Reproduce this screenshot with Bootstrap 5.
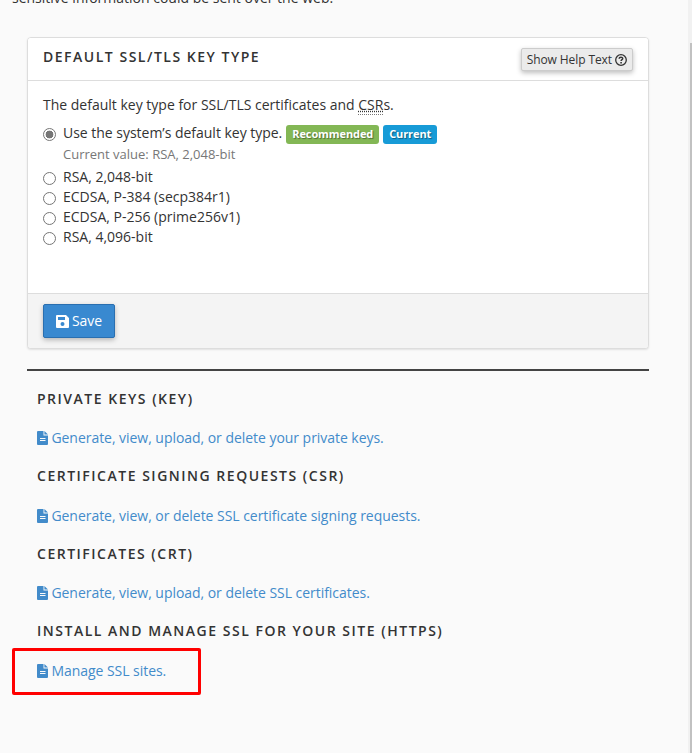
<!DOCTYPE html>
<html lang="en">
<head>
<meta charset="utf-8">
<meta name="viewport" content="width=device-width, initial-scale=1">
<title>SSL/TLS</title>
<link href="https://cdn.jsdelivr.net/npm/bootstrap@5.3.0/dist/css/bootstrap.min.css" rel="stylesheet">
<style>
body{font-family:"Open Sans",sans-serif;font-size:14px;line-height:20px;color:#333;background:#fafafa;height:753px;overflow:hidden}
.page{height:753px;width:688px;padding:0 39px 0 27px;overflow:hidden}
.intro{margin:-12px 0 29px -15px;height:20px}
.panel{--bs-card-border-color:#ddd;--bs-card-border-radius:4px;--bs-card-inner-border-radius:3px;height:312px;box-shadow:0 1px 2px rgba(0,0,0,.1);color:#333}
.panel .card-header{height:43px;padding:9px 15px 0;background:#fff}
.panel .card-body{padding:14px 15px 0}
.panel .card-footer{height:55px;padding:10px 15px;background:#f4f4f4}
.caps{font-size:14px;line-height:20px;font-weight:600;letter-spacing:1.51px;text-transform:uppercase;margin:0;color:#333;white-space:nowrap}
.btn-help{height:23px;margin-top:1px;padding:0 5px;border:1px solid #ccc;border-radius:2px;background:#ebebeb;color:#333;font-size:12px;letter-spacing:-.09px;line-height:21px;box-shadow:0 2px 5px rgba(0,0,0,.26)}
.btn-help svg{margin-left:3px}
.btn-save{height:34px;width:72px;padding:0;border:1px solid #2a6fb0;border-radius:2px;background:#3989d0;color:#fff;font-size:14px;letter-spacing:-.1px;line-height:32px;box-shadow:0 2px 5px rgba(0,0,0,.26)}
.btn-save svg{margin-right:3px}
.term{border-bottom:1px dotted #777;text-decoration:underline dotted;cursor:help}
.opt{height:20px}
.opt input{width:13px;height:13px;margin:5px 7px 0 0;appearance:none;border:1px solid #767676;border-radius:50%;background:#fff;flex:none}
.opt input:checked{background:radial-gradient(circle,#767676 0 3.6px,#fff 4.2px)}
.sysdef{letter-spacing:-.02px}
.tag{height:19px;margin:2px 0 0 4px;padding:0 6px;border-radius:3px;font-size:11px;letter-spacing:-.1px;line-height:18px;font-weight:700;color:#fff;text-shadow:1px 1px 1px rgba(0,0,0,.4)}
.tag-green{background:#83b755}
.tag-blue{background:#179bd7}
.hint{font-size:13px;color:#777;margin-left:20px;height:24px;line-height:22px}
.rule{height:2px;background:#444;margin:20px 0 18px}
.links{padding-left:10px}
.links a{color:#428bca;text-decoration:none;white-space:nowrap;letter-spacing:-.04px}
.links a svg{margin-right:3.4px}
.entry{height:77px}
.entry a{margin-top:19px;height:20px}
.entry:nth-child(even){height:78px}
.entry:nth-child(even) a{margin-top:20px}
.marker{position:absolute;left:12px;top:648px;width:189px;height:47px;border:3px solid #f00;border-radius:2px;pointer-events:none}
.track{width:4px;height:753px;background:#f1f1f1;padding:43px 0 0 2px}
.thumb{height:710px;background:#c1c1c1}
</style>
</head>
<body class="d-flex position-relative">
<main class="page">
  <p class="intro">sensitive information could be sent over the web.</p>
  <section class="card panel">
    <div class="card-header d-flex justify-content-between align-items-start">
      <h2 class="caps">Default SSL/TLS Key Type</h2>
      <button class="btn btn-help d-flex align-items-center" type="button">Show Help Text
        <svg width="12" height="12" viewBox="0 0 12 12" fill="none" stroke="#333"><circle cx="6" cy="6" r="5.3" stroke-width="1.3"/><path d="M4.1 4.7C4.2 2.6 7.8 2.7 7.7 4.6C7.6 5.7 6.1 5.7 6.1 7" stroke-width="1.5"/><path d="M6.1 7.9v1.5" stroke-width="1.6"/></svg>
      </button>
    </div>
    <div class="card-body">
      <p class="mb-2">The default key type for SSL/TLS certificates and <span class="term">CSR</span>s.</p>
      <label class="opt d-flex"><input type="radio" name="k" checked><span class="sysdef">Use the system’s default key type.</span><span class="tag tag-green">Recommended</span><span class="tag tag-blue">Current</span></label>
      <div class="hint">Current value: RSA, 2,048-bit</div>
      <label class="opt d-flex"><input type="radio" name="k"><span>RSA, 2,048-bit</span></label>
      <label class="opt d-flex"><input type="radio" name="k"><span>ECDSA, P-384 (secp384r1)</span></label>
      <label class="opt d-flex"><input type="radio" name="k"><span>ECDSA, P-256 (prime256v1)</span></label>
      <label class="opt d-flex"><input type="radio" name="k"><span>RSA, 4,096-bit</span></label>
    </div>
    <div class="card-footer">
      <button class="btn btn-save d-flex align-items-center justify-content-center" type="button"><svg width="13" height="13" viewBox="0 0 13 13"><path fill="#fff" fill-rule="evenodd" d="M1 0h9l3 3v9a1 1 0 0 1-1 1H1a1 1 0 0 1-1-1V1a1 1 0 0 1 1-1zM2 2v3h7V2zM6.5 7a2 2 0 1 0 0 4a2 2 0 0 0 0-4z"/></svg>Save</button>
    </div>
  </section>
  <div class="rule"></div>
  <svg class="d-none"><symbol id="doc" viewBox="0 0 11 14"><path fill="#428bca" d="M1 0h5.5v4.5H11V13a1 1 0 0 1-1 1H1a1 1 0 0 1-1-1V1a1 1 0 0 1 1-1zM7.4 0L11 3.6H7.4z"/><path stroke="#fafafa" d="M3 7.5h5.5M3 9.5h5.5"/></symbol></svg>
  <div class="links">
    <div class="entry"><h3 class="caps">Private Keys (KEY)</h3><a href="#" class="d-flex align-items-center"><svg width="11" height="14"><use href="#doc"/></svg><span>Generate, view, upload, or delete your private keys.</span></a></div>
    <div class="entry"><h3 class="caps">Certificate Signing Requests (CSR)</h3><a href="#" class="d-flex align-items-center"><svg width="11" height="14"><use href="#doc"/></svg><span>Generate, view, or delete SSL certificate signing requests.</span></a></div>
    <div class="entry"><h3 class="caps">Certificates (CRT)</h3><a href="#" class="d-flex align-items-center"><svg width="11" height="14"><use href="#doc"/></svg><span>Generate, view, upload, or delete SSL certificates.</span></a></div>
    <div class="entry"><h3 class="caps">Install and Manage SSL for your site (HTTPS)</h3><a href="#" class="d-flex align-items-center"><svg width="11" height="14"><use href="#doc"/></svg><span>Manage SSL sites.</span></a></div>
  </div>
</main>
<div class="track"><div class="thumb"></div></div>
<div class="marker"></div>
<script src="https://cdn.jsdelivr.net/npm/bootstrap@5.3.0/dist/js/bootstrap.bundle.min.js"></script>
</body>
</html>
